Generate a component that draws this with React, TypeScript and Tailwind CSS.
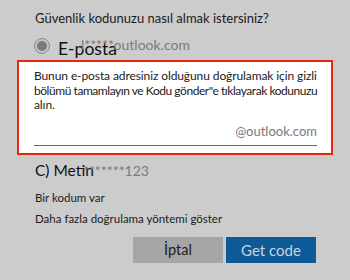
export default function App() {
  return (
    <div
      className="w-[350px] h-[280px] bg-[#cccccc] text-[#1b1b1b] overflow-hidden"
      style={{ fontFamily: 'Lato, "Liberation Sans", sans-serif' }}
    >
      <div className="pl-[35px] pt-[9px] text-[13px] leading-[18px]">
        Güvenlik kodunuzu nasıl almak istersiniz?
      </div>

      {/* email option */}
      <div className="flex items-center pl-[34px] mt-[7px] h-[24px]">
        <span className="w-[16px] h-[16px] rounded-full border border-[#8a8a8a] bg-[#c4c4c4] flex items-center justify-center">
          <span className="w-[10px] h-[10px] rounded-full bg-[#7a7a7a]" />
        </span>
        <span className="ml-[8px] text-[17.5px] leading-[24px] text-[#111] mt-[5px]">E-posta</span>
        <span className="-ml-[36px] text-[14px] text-[#7a7a7a] -mt-[3px]">l*****outlook.com</span>
      </div>

      {/* hint box */}
      <div className="mx-[17px] mt-[2px] h-[95px] border-2 border-[#e5290f] bg-white pl-[15px] pt-[7px]">
        <p className="whitespace-nowrap text-[12px] leading-[14.5px] tracking-[-0.1px] text-[#1b1b1b]">
          Bunun e-posta adresiniz olduğunu doğrulamak için gizli
          <br />
          <span className="tracking-[-0.45px]">bölümü tamamlayın ve Kodu gönder"e tıklayarak kodunuzu</span>
          <br />
          alın.
        </p>
        <div className="mr-[14px] mt-[10px] text-right text-[13px] leading-[16px] text-[#7a7a7a]">@outlook.com</div>
        <div className="mr-[14px] mt-[6px] h-[1px] bg-[#6b6b6b]" />
      </div>

      {/* text option */}
      <div className="flex items-baseline pl-[35px] mt-[4px] h-[22px]">
        <span className="text-[15.5px] leading-[22px] text-[#111]">C) Metin</span>
        <span className="-ml-[11px] text-[14px] text-[#7a7a7a]">*******123</span>
      </div>

      <div className="pl-[35px] mt-[10px] text-[11.5px] leading-[14px]">Bir kodum var</div>
      <div className="pl-[35px] mt-[7px] text-[11.5px] leading-[14px]">Daha fazla doğrulama yöntemi göster</div>

      <div className="flex justify-end gap-[3px] pr-[34px] mt-[11px]">
        <button className="w-[90px] h-[26px] bg-[#a6a6a6] text-[14.5px] text-[#1b1b1b]">İptal</button>
        <button className="w-[90px] h-[26px] bg-[#0e5a96] text-[15px] text-[#c9d4df]">Get code</button>
      </div>
    </div>
  );
}
